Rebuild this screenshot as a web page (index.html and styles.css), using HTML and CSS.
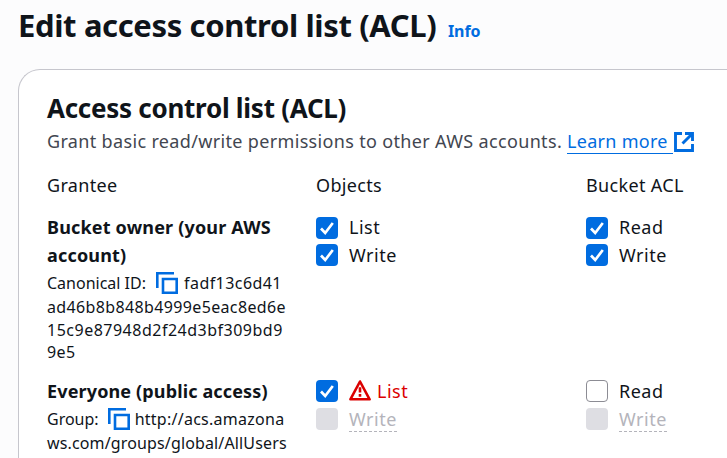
FILE: index.html
```html
<!DOCTYPE html>
<html lang="en">
<head>
<meta charset="utf-8">
<title>Edit access control list (ACL)</title>
<link rel="stylesheet" href="styles.css">
</head>
<body>
<svg class="defs" aria-hidden="true">
  <symbol id="copy" viewBox="0 0 22 22"><path d="M1.300 16V1.300H18M7 7h13.700v13.700H7z" fill="none" stroke="currentColor" stroke-width="2.600"/></symbol>
  <symbol id="check" viewBox="0 0 22 22"><path d="M5 11.500l4.200 4.500L16.800 6" fill="none" stroke="#fff" stroke-width="2.700"/></symbol>
</svg>
<header class="page-header"><h1>Edit access control list (ACL)</h1><a class="info">Info</a></header>
<main class="card">
  <h2>Access control list (ACL)</h2>
  <p class="description">Grant basic read/write permissions to other AWS accounts. <a class="learn"><span class="learn-text">Learn more </span><svg class="external" viewBox="0 0 20 20"><path d="M8 1.500H1.500v17h17V12M11 1.500h7.500V9M18 2L8.500 11.500" fill="none" stroke="currentColor" stroke-width="2.900"/></svg></a></p>
  <div class="row columns"><span>Grantee</span><span>Objects</span><span>Bucket ACL</span></div>
  <section class="row owner">
    <div>
      <h3>Bucket owner (your AWS account)</h3>
      <div class="ident"><div class="ident-first"><span>Canonical ID:</span><svg class="copy"><use href="#copy"/></svg><span>fadf13c6d41</span></div><div>ad46b8b848b4999e5eac8ed6e</div><div class="wide">15c9e87948d2f24d3bf309bd9</div><div>9e5</div></div>
    </div>
    <div class="checks">
      <label><svg class="box on"><use href="#check"/></svg><span>List</span></label>
      <label><svg class="box on"><use href="#check"/></svg><span>Write</span></label>
    </div>
    <div class="checks">
      <label><svg class="box on"><use href="#check"/></svg><span>Read</span></label>
      <label><svg class="box on"><use href="#check"/></svg><span>Write</span></label>
    </div>
  </section>
  <section class="row everyone">
    <div>
      <h3>Everyone (public access)</h3>
      <div class="ident group"><div class="ident-first"><span>Group:</span><svg class="copy"><use href="#copy"/></svg><span>http://acs.amazona</span></div><div>ws.com/groups/global/AllUsers</div></div>
    </div>
    <div class="checks">
      <label><svg class="box on"><use href="#check"/></svg><span class="warning"><svg class="alert" viewBox="0 0 22 22"><path d="M11 1.500L20.600 19.300H1.400z" fill="none" stroke="currentColor" stroke-width="2.600" stroke-linejoin="round"/><path d="M11 7.200v5.200M11 14v2.700" stroke="currentColor" stroke-width="2.600"/></svg>List</span></label>
      <label class="disabled"><span class="box off"></span><span class="hint">Write</span></label>
    </div>
    <div class="checks">
      <label><span class="box"></span><span>Read</span></label>
      <label class="disabled"><span class="box off"></span><span class="hint">Write</span></label>
    </div>
  </section>
</main>
</body>
</html>
```
FILE: styles.css
```css
* { box-sizing: border-box; }
body {
  margin: 0;
  height: 458px;
  overflow: hidden;
  background: #fcfcfd;
  color: #0f141a;
  font: 18px/28px "Noto Sans", sans-serif;
  letter-spacing: 0.34px;
}
.defs { display: none; }
h1, h2, h3, p { margin: 0; }
.page-header {
  display: flex;
  align-items: baseline;
  gap: 11px;
  height: 69px;
  padding: 4px 0 0 18px;
  white-space: nowrap;
}
h1 { font-size: 31px; line-height: 42px; letter-spacing: -0.37px; width: 419px; }
.info { color: #006ce0; font-size: 16px; font-weight: 700; letter-spacing: -0.1px; }
.card {
  height: 389px;
  margin-left: 18px;
  padding: 21px 0 0 28px;
  border: solid #c6c6cd;
  border-width: 1px 0 0 1px;
  border-top-left-radius: 22px;
  background: #fff;
}
h2 { font-size: 26px; line-height: 34px; letter-spacing: -0.27px; white-space: nowrap; }
.description { display: flex; height: 28px; margin-top: 3px; gap: 5px; line-height: 26px; color: #424650; white-space: nowrap; }
.learn { display: flex; align-items: flex-start; gap: 1px; color: #006ce0; }
.learn-text { height: 26px; width: 106px; letter-spacing: 0.28px; border-bottom: 1px solid #006ce0; }
.external { width: 20px; height: 20px; margin-top: 4px; }
.row { display: grid; grid-template-columns: 269px 270px 1fr; }
.columns { margin-top: 16px; line-height: 26px; height: 42px; }
.owner { height: 163px; }
h3 { font-size: 18px; line-height: 28px; letter-spacing: 0.18px; width: 240px; margin: -1px 0 1px; }
.everyone h3 { margin: 0 0 1px; letter-spacing: 0.14px; }
.ident { font-size: 16px; line-height: 22.7px; letter-spacing: 0.36px; white-space: nowrap; }
.wide { letter-spacing: 0.5px; }
.ident-first { display: flex; align-items: center; height: 26px; letter-spacing: 0; }
.ident-first span:last-child { letter-spacing: 0.44px; }
.group { letter-spacing: 0.14px; }
.copy { width: 22px; height: 22px; margin: 0 6px 0 10px; color: #006ce0; }
.group .copy { margin: 0 5px 0 9px; }
.group .ident-first span:last-child { letter-spacing: 0.26px; }
.checks label { display: flex; align-items: center; gap: 11px; height: 27.5px; }
.checks label > span:last-child { position: relative; top: -0.5px; letter-spacing: 0.5px; }
.everyone label > span:last-child { top: 0.5px; }
.everyone .disabled { height: 28px; margin-top: 0.5px; }
.box { flex: none; width: 22px; height: 22px; border: 1.5px solid #8c8c94; border-radius: 4px; }
.box.on { border: 0; background: #006ce0; }
.box.off { border: 0; background: #dedee3; }
.warning { display: flex; align-items: center; gap: 6px; color: #db0000; }
.alert { width: 22px; height: 22px; }
.disabled { color: #b4b4bb; }
.checks .hint { height: 25px; line-height: 24px; border-bottom: 1px dashed #b4b4bb; }
```
